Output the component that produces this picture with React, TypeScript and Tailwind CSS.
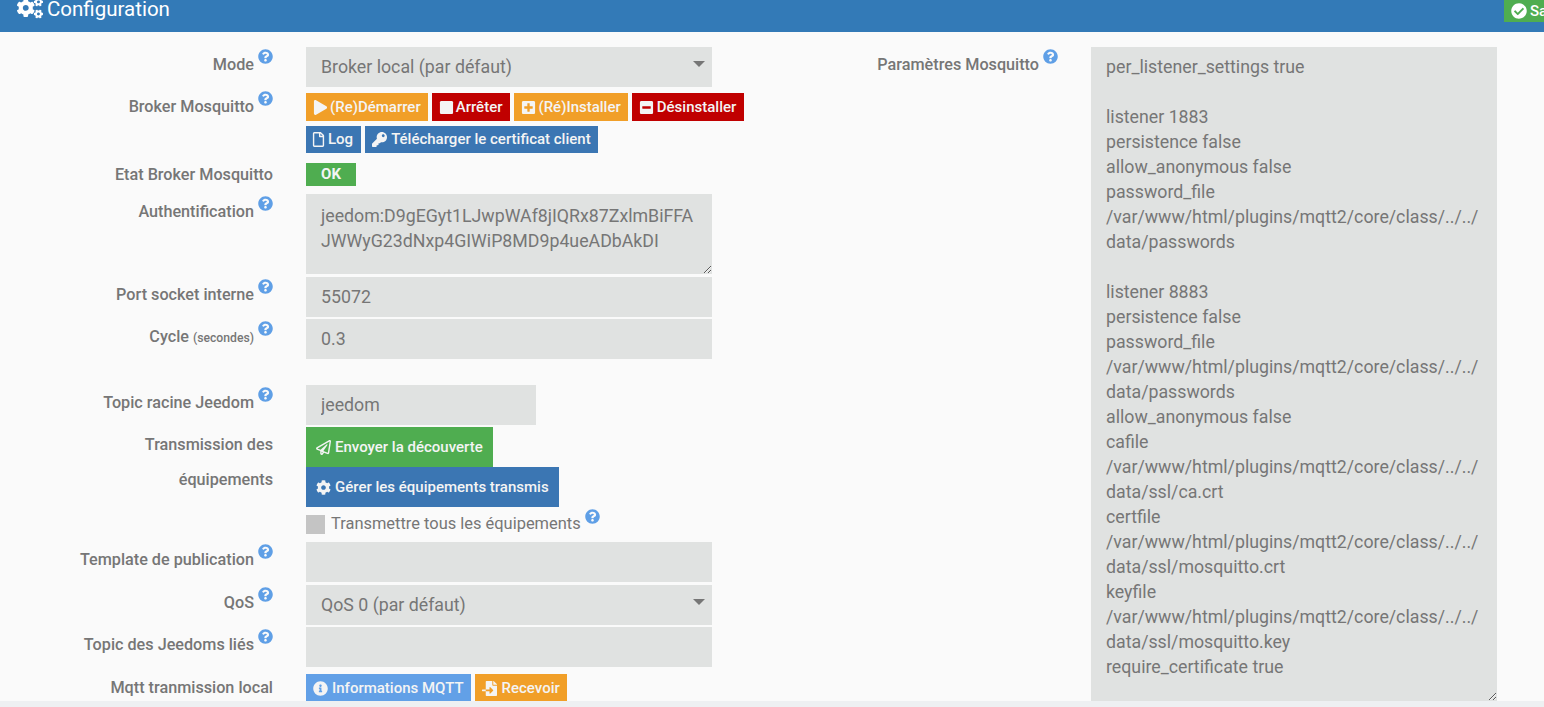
import React from "react";
import { FaCogs, FaPlay, FaSquare, FaPlusSquare, FaMinusSquare, FaRegFile, FaKey, FaCheckCircle, FaRegPaperPlane, FaCog, FaQuestionCircle, FaInfoCircle, FaFileImport } from "react-icons/fa";

const mosq = `per_listener_settings true

listener 1883
persistence false
allow_anonymous false
password_file /var/www/html/plugins/mqtt2/core/class/../../data/passwords

listener 8883
persistence false
password_file /var/www/html/plugins/mqtt2/core/class/../../data/passwords
allow_anonymous false
cafile /var/www/html/plugins/mqtt2/core/class/../../data/ssl/ca.crt
certfile /var/www/html/plugins/mqtt2/core/class/../../data/ssl/mosquitto.crt
keyfile /var/www/html/plugins/mqtt2/core/class/../../data/ssl/mosquitto.key
require_certificate true
`;

function Help({ className = "" }: { className?: string }) {
  return <FaQuestionCircle className={"text-[15px] text-[#5f9fe6] shrink-0 " + className} />;
}

function Label({ children, help = false, top = "pt-[8px]" }: { children: React.ReactNode; help?: boolean; top?: string }) {
  return (
    <div className={"w-[273px] shrink-0 flex justify-end items-start text-[16.2px] leading-[20px] font-medium text-[#767676] text-right " + top}>
      <span>{children}</span>
      {help && <Help className="ml-[4px] -mt-[6px]" />}
    </div>
  );
}

function Btn({ bg, icon, children, cls = "h-[28px] pl-[7px] pr-[7px]", gap = "gap-[4px]" }: { bg: string; icon: React.ReactNode; children: React.ReactNode; cls?: string; gap?: string }) {
  return (
    <span className={"inline-flex items-center text-[15px] font-medium text-[#f4f4f4] whitespace-nowrap " + gap + " " + bg + " " + cls}>
      {icon}
      {children}
    </span>
  );
}

const field = "block w-[406px] h-[40px] bg-[#e0e2e1] text-[#767676] text-[17.75px] px-[15px] outline-none border-0";

function Row({ children, cls = "" }: { children: React.ReactNode; cls?: string }) {
  return <div className={"flex " + cls}>{children}</div>;
}

function Caret() {
  return <span className="absolute right-[7px] top-[14px] w-0 h-0 border-x-[6.5px] border-x-transparent border-t-[6.5px] border-t-[#767676]" />;
}

export default function App() {
  return (
    <div className="h-[707px] overflow-hidden bg-[#fafafa] font-['Roboto',sans-serif] flex flex-col">
      <header className="h-[32px] shrink-0 bg-[#337ab7] flex items-start justify-between">
        <div className="flex items-center pl-[17px] h-[19px] text-[20.5px] text-white">
          <FaCogs className="text-[26px] mr-[4px] -mt-[3px]" />
          <span>Configuration</span>
        </div>
        <div className="w-[40px] h-[22px] bg-[#4fad50] flex items-center pl-[7px] gap-[3px] text-[15px] font-medium text-white overflow-hidden">
          <FaCheckCircle className="text-[16px] shrink-0" />
          <span>Sauvegarder</span>
        </div>
      </header>
      <main className="flex-1 flex pt-[15px] min-h-0">
        <div className="w-[712px] shrink-0">
          <Row cls="h-[46px]">
            <Label help>Mode</Label>
            <div className="relative ml-[33px] h-[40px]">
              <select className={field + " appearance-none"} defaultValue="a"><option value="a">Broker local (par défaut)</option></select>
              <Caret />
            </div>
          </Row>
          <Row cls="h-[70px]">
            <Label help top="pt-[4px]">Broker Mosquitto</Label>
            <div className="ml-[33px] w-[460px] flex flex-col">
              <div className="flex gap-[4px]">
                <Btn bg="bg-[#f19f28]" gap="gap-[2px]" icon={<FaPlay className="text-[15px]" />}>(Re)Démarrer</Btn>
                <Btn bg="bg-[#c00000]" gap="gap-[2px]" icon={<FaSquare className="text-[15px]" />} cls="h-[28px] pl-[7px] pr-[8px]">Arrêter</Btn>
                <Btn bg="bg-[#f19f28]" gap="gap-[2px]" icon={<FaPlusSquare className="text-[15px]" />}>(Ré)Installer</Btn>
                <Btn bg="bg-[#c00000]" gap="gap-[3px]" icon={<FaMinusSquare className="text-[15px]" />} cls="h-[28px] pl-[7px] pr-[8px]">Désinstaller</Btn>
              </div>
              <div className="flex gap-[4px] mt-[5px]">
                <Btn bg="bg-[#3b76b3]" gap="gap-[2px]" icon={<FaRegFile className="text-[15px] -ml-[2px]" />} cls="h-[27px] pl-[7px] pr-[8px]">Log</Btn>
                <Btn bg="bg-[#3b76b3]" icon={<FaKey className="text-[15px]" />} cls="h-[27px] px-[7px]">Télécharger le certificat client</Btn>
              </div>
            </div>
          </Row>
          <Row cls="h-[31px]">
            <Label top="pt-[2px]">Etat Broker Mosquitto</Label>
            <div className="ml-[33px] w-[50px] h-[23px] bg-[#4fad50] text-[#f4f4f4] text-[15px] font-bold flex items-center justify-center">OK</div>
          </Row>
          <Row cls="h-[83px]">
            <Label help top="pt-[8px]">Authentification</Label>
            <textarea
              className="block ml-[33px] w-[406px] h-[80px] bg-[#e0e2e1] text-[#767676] text-[17.75px] leading-[24.6px] px-[15px] py-[10px] outline-none border-0 overflow-hidden resize-y"
              defaultValue="jeedom:D9gEGyt1LJwpWAf8jIQRx87ZxlmBiFFAJWWyG23dNxp4GIWiP8MD9p4ueADbAkDI"
            />
          </Row>
          <Row cls="h-[42px]">
            <Label help>Port socket interne</Label>
            <input className={field + " ml-[33px]"} defaultValue="55072" />
          </Row>
          <Row cls="h-[66px]">
            <Label help>
              Cycle <span className="text-[12.2px]">(secondes)</span>
            </Label>
            <input className={field + " ml-[33px]"} defaultValue="0.3" />
          </Row>
          <Row cls="h-[42px]">
            <Label help>Topic racine Jeedom</Label>
            <input className={field + " ml-[33px] !w-[230px]"} defaultValue="jeedom" />
          </Row>
          <Row cls="h-[115px]">
            <div className="w-[273px] shrink-0 text-[16.2px] leading-[35px] font-medium text-[#767676] text-right">
              Transmission des<br />équipements
            </div>
            <div className="ml-[33px] flex flex-col items-start">
              <Btn bg="bg-[#4fad50]" icon={<FaRegPaperPlane className="text-[15px]" />} cls="h-[40px] px-[10px] pt-[1px]">Envoyer la découverte</Btn>
              <Btn bg="bg-[#3b76b3]" icon={<FaCog className="text-[15px]" />} cls="h-[40px] px-[10px] pt-[1px]">Gérer les équipements transmis</Btn>
              <div className="flex items-start mt-[8px] h-[19px]">
                <span className="w-[19px] h-[19px] bg-[#c4c4c4]" />
                <span className="ml-[6px] text-[16.45px] leading-[18px] text-[#767676]">Transmettre tous les équipements</span>
                <Help className="ml-[4px] -mt-[6px]" />
              </div>
            </div>
          </Row>
          <Row cls="h-[43px]">
            <Label help>Template de publication</Label>
            <input className={field + " ml-[33px]"} />
          </Row>
          <Row cls="h-[42px]">
            <Label help>QoS</Label>
            <div className="relative ml-[33px] h-[40px]">
              <select className={field + " appearance-none"} defaultValue="0"><option value="0">QoS 0 (par défaut)</option></select>
              <Caret />
            </div>
          </Row>
          <Row cls="h-[47px]">
            <Label help>Topic des Jeedoms liés</Label>
            <input className={field + " ml-[33px]"} />
          </Row>
          <Row>
            <Label top="pt-[4px]">Mqtt tranmission local</Label>
            <div className="ml-[33px] flex gap-[4px]">
              <Btn bg="bg-[#62a0e7]" icon={<FaInfoCircle className="text-[15px]" />} cls="h-[27px] px-[7px] pt-[1px]">Informations MQTT</Btn>
              <Btn bg="bg-[#f19f28]" gap="gap-[5px]" icon={<FaFileImport className="text-[15px]" />} cls="h-[27px] px-[7px] pt-[1px]">Recevoir</Btn>
            </div>
          </Row>
        </div>
        <div className="flex items-start">
          <div className="w-[346px] shrink-0 flex justify-end pt-[8px] text-[16.2px] leading-[20px] font-medium text-[#767676]">
            <span>Paramètres Mosquitto</span>
            <Help className="ml-[4px] -mt-[6px]" />
          </div>
          <textarea
            className="block ml-[33px] w-[406px] h-[654px] bg-[#e0e2e1] text-[#767676] text-[17.75px] leading-[25px] px-[15px] py-[8px] outline-none border-0 overflow-hidden resize-y"
            defaultValue={mosq}
          />
        </div>
      </main>
      <div className="h-[6px] shrink-0 bg-[#eef0f2]" />
    </div>
  );
}
